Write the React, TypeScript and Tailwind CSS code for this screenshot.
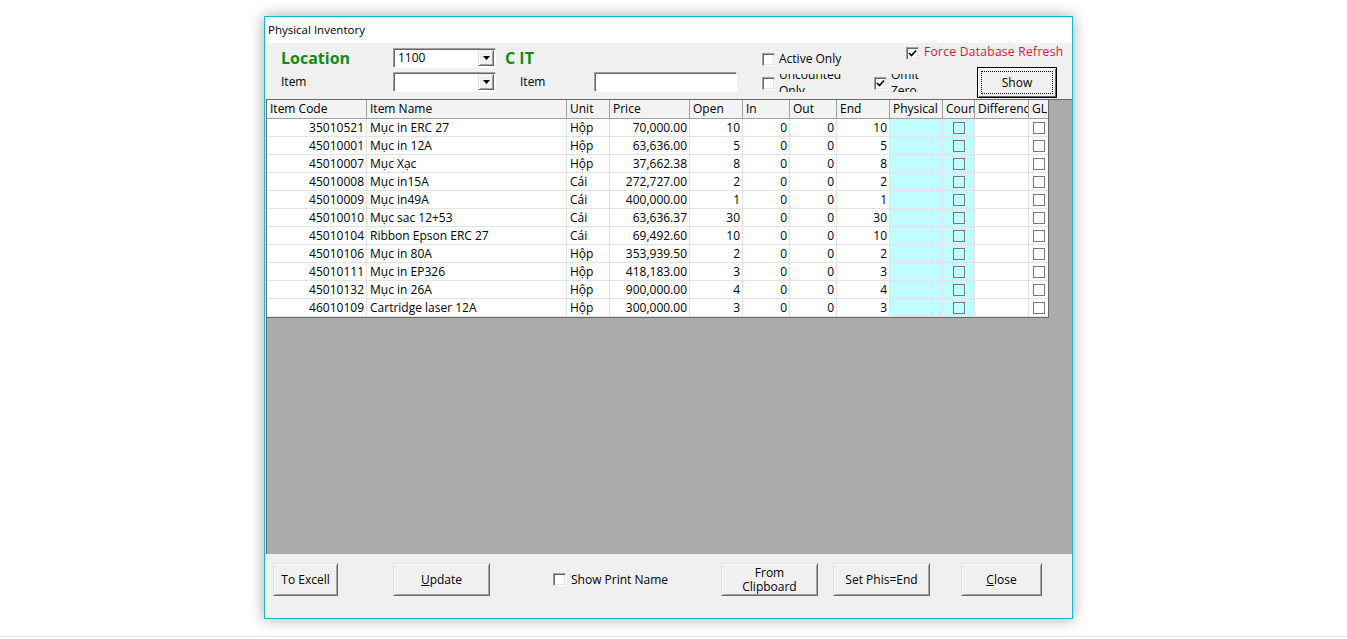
import React from "react";

interface Col {
    head: string;
    w: string;
    align: "left" | "right" | "check" | "none";
    bg: string;
    last?: boolean;
}

const cols: Col[] = [
    { head: "Item Code", w: "w-[100px]", align: "right", bg: "bg-white" },
    { head: "Item Name", w: "w-[200px]", align: "left", bg: "bg-white" },
    { head: "Unit", w: "w-[43px]", align: "left", bg: "bg-white" },
    { head: "Price", w: "w-[80px]", align: "right", bg: "bg-white" },
    { head: "Open", w: "w-[53px]", align: "right", bg: "bg-white" },
    { head: "In", w: "w-[47px]", align: "right", bg: "bg-white" },
    { head: "Out", w: "w-[47px]", align: "right", bg: "bg-white" },
    { head: "End", w: "w-[53px]", align: "right", bg: "bg-white" },
    { head: "Physical", w: "w-[53px]", align: "none", bg: "bg-[#c0ffff]" },
    { head: "Count", w: "w-[32px]", align: "check", bg: "bg-[#c0ffff]" },
    { head: "Difference", w: "w-[54px]", align: "none", bg: "bg-white" },
    { head: "GL", w: "w-[19px]", align: "check", bg: "bg-white", last: true },
];

// code, name, unit, price, open, in, out, end
const rows: string[][] = [
    ["35010521", "Mục in ERC 27", "Hộp", "70,000.00", "10", "0", "0", "10"],
    ["45010001", "Mục in 12A", "Hộp", "63,636.00", "5", "0", "0", "5"],
    ["45010007", "Mục Xạc", "Hộp", "37,662.38", "8", "0", "0", "8"],
    ["45010008", "Mục in15A", "Cái", "272,727.00", "2", "0", "0", "2"],
    ["45010009", "Mục in49A", "Cái", "400,000.00", "1", "0", "0", "1"],
    ["45010010", "Mục sac 12+53", "Cái", "63,636.37", "30", "0", "0", "30"],
    ["45010104", "Ribbon Epson ERC 27", "Cái", "69,492.60", "10", "0", "0", "10"],
    ["45010106", "Mục in 80A", "Hộp", "353,939.50", "2", "0", "0", "2"],
    ["45010111", "Mục in EP326", "Hộp", "418,183.00", "3", "0", "0", "3"],
    ["45010132", "Mục in 26A", "Hộp", "900,000.00", "4", "0", "0", "4"],
    ["46010109", "Cartridge laser 12A", "Hộp", "300,000.00", "3", "0", "0", "3"],
];

function CheckBox({ checked }: { checked?: boolean }) {
    return (
        <div className="w-[13px] h-[13px] shrink-0 bg-white border border-t-[#a0a0a0] border-l-[#a0a0a0] border-r-white border-b-white shadow-[inset_1px_1px_0_#696969,inset_-1px_-1px_0_#e3e3e3] flex items-center justify-center">
            {checked && (
                <svg width="9" height="9" viewBox="0 0 9 9">
                    <path d="M1 4 L3.5 6.5 L8 1.5" stroke="#000" strokeWidth="1.7" fill="none" />
                </svg>
            )}
        </div>
    );
}

function Combo({ value }: { value?: string }) {
    return (
        <div className="w-[103px] h-[20px] bg-white border border-t-[#a0a0a0] border-l-[#a0a0a0] border-r-white border-b-white shadow-[inset_1px_1px_0_#696969] flex items-center">
            <span className="flex-1 pl-[4px] leading-none">{value}</span>
            <div className="w-[16px] h-[16px] mr-px bg-[#f0f0f0] border border-t-[#e3e3e3] border-l-[#e3e3e3] border-r-[#696969] border-b-[#696969] shadow-[inset_1px_1px_0_#fff,inset_-1px_-1px_0_#a0a0a0] flex items-center justify-center">
                <svg width="7" height="4" viewBox="0 0 7 4">
                    <polygon points="0,0 7,0 3.5,4" fill="#000" />
                </svg>
            </div>
        </div>
    );
}

function Btn({ className, children }: { className: string; children: React.ReactNode }) {
    return (
        <div
            className={
                "h-[33px] shrink-0 bg-[#f0f0f0] border border-t-[#e3e3e3] border-l-[#e3e3e3] border-r-[#696969] border-b-[#696969] shadow-[inset_1px_1px_0_#fff,inset_-1px_-1px_0_#a0a0a0] flex items-center justify-center text-center leading-[14px] " +
                className
            }
        >
            {children}
        </div>
    );
}

function Clipped({ a, b }: { a: string; b: string }) {
    return (
        <div className="h-[18px] w-[80px] shrink-0 overflow-hidden flex flex-col justify-center leading-[16px]">
            <div>{a}</div>
            <div>{b}</div>
        </div>
    );
}

export default function App() {
    return (
        <div className="h-[639px] w-full bg-white overflow-hidden text-[12px] text-black font-['Open_Sans',sans-serif]">
            <div className="pt-[16px] pl-[264px]">
                <div className="w-[809px] h-[603px] border border-[#18b4c8] bg-[#f0f0f0] shadow-[0_0_14px_rgba(0,0,0,0.35)] flex flex-col">
                    {/* title */}
                    <div className="h-[26px] bg-white flex items-center pl-[3px] text-[11.5px]">Physical Inventory</div>

                    {/* filters */}
                    <div className="h-[56px] flex pl-[16px]">
                        <div className="w-[112px] flex flex-col">
                            <div className="mt-[5px] h-[20px] flex items-center text-[16px] font-bold text-[#138a13]">Location</div>
                            <div className="mt-[4px] h-[20px] flex items-center">Item</div>
                        </div>
                        <div className="w-[103px] flex flex-col">
                            <div className="mt-[5px]"><Combo value="1100" /></div>
                            <div className="mt-[4px]"><Combo /></div>
                        </div>
                        <div className="w-[98px] flex flex-col">
                            <div className="mt-[5px] h-[20px] flex items-center pl-[9px] text-[16px] font-bold text-[#138a13]">C IT</div>
                            <div className="mt-[4px] h-[20px] flex items-center pl-[24px]">Item</div>
                        </div>
                        <div className="w-[143px] flex flex-col">
                            <div className="mt-[29px] h-[20px] bg-white border border-t-[#a0a0a0] border-l-[#a0a0a0] border-r-white border-b-white shadow-[inset_1px_1px_0_#696969]" />
                        </div>
                        <div className="w-[137px] flex flex-col pl-[25px]">
                            <div className="mt-[6px] h-[20px] flex items-center gap-[4px]">
                                <CheckBox />
                                <span>Active Only</span>
                            </div>
                            <div className="mt-[5px] h-[18px] flex items-center gap-[4px]">
                                <CheckBox />
                                <Clipped a="Uncounted" b="Only" />
                            </div>
                        </div>
                        <div className="w-[32px] flex flex-col">
                            <div className="mt-[31px] h-[18px] flex items-center gap-[4px]">
                                <CheckBox checked />
                                <Clipped a="Omit" b="Zero" />
                            </div>
                        </div>
                        <div className="flex-1 flex flex-col">
                            <div className="mt-[2px] h-[16px] flex items-center gap-[5px]">
                                <CheckBox checked />
                                <span className="text-[#e0142c] leading-none -mt-[3px] tracking-[0.3px]">Force Database Refresh</span>
                            </div>
                            <div className="mt-[6px] ml-[71px] w-[80px] h-[31px] bg-[#f0f0f0] border border-black shadow-[inset_1px_1px_0_#fff,inset_-1px_-1px_0_#696969] p-[3px]">
                                <div className="w-full h-full border border-dotted border-black flex items-center justify-center">Show</div>
                            </div>
                        </div>
                    </div>

                    {/* grid */}
                    <div className="h-[455px] ml-px border-l border-t border-[#696969] bg-[#ababab]">
                        <div className="w-[782px] border-r border-b border-[#696969] text-[12px]">
                            <div className="h-[19px] flex bg-[#f3f3f3] border-b border-[#a0a0a0]">
                                {cols.map((c) => (
                                    <div
                                        key={c.head}
                                        className={
                                            c.w +
                                            " h-full overflow-hidden whitespace-nowrap pl-[3px] leading-[18px] " +
                                            (c.last ? "" : "border-r border-[#a0a0a0]")
                                        }
                                    >
                                        {c.head}
                                    </div>
                                ))}
                            </div>
                            {rows.map((r) => (
                                <div key={r[0]} className="h-[18px] flex border-b border-[#e3e3e3]">
                                    {cols.map((c, i) => (
                                        <div
                                            key={c.head}
                                            className={
                                                c.w +
                                                " " +
                                                c.bg +
                                                " h-full overflow-hidden whitespace-nowrap leading-[17px] flex items-center " +
                                                (c.align === "right" ? "justify-end pr-[2px] " : "") +
                                                (c.align === "left" ? "pl-[3px] " : "") +
                                                (c.align === "check" ? "justify-center " : "") +
                                                (c.last ? "" : "border-r border-[#e3e3e3]")
                                            }
                                        >
                                            {c.align === "check" ? (
                                                <div className="w-[12px] h-[12px] border border-[#7a7a7a]" />
                                            ) : i < 8 ? (
                                                r[i]
                                            ) : null}
                                        </div>
                                    ))}
                                </div>
                            ))}
                        </div>
                    </div>

                    {/* buttons */}
                    <div className="h-[64px] flex items-start pt-[9px] pl-[8px]">
                        <Btn className="w-[65px]">To Excell</Btn>
                        <Btn className="w-[97px] ml-[55px]">
                            <span><span className="underline">U</span>pdate</span>
                        </Btn>
                        <div className="w-[168px] h-[33px] ml-[63px] flex items-center gap-[5px]">
                            <CheckBox />
                            <span>Show Print Name</span>
                        </div>
                        <Btn className="w-[97px]">
                            <span>From<br />Clipboard</span>
                        </Btn>
                        <Btn className="w-[97px] ml-[15px]">Set Phis=End</Btn>
                        <Btn className="w-[81px] ml-[31px]">
                            <span><span className="underline">C</span>lose</span>
                        </Btn>
                    </div>
                </div>
            </div>
            <div className="mt-[17px] h-px bg-[#e6e6e6]" />
        </div>
    );
}
